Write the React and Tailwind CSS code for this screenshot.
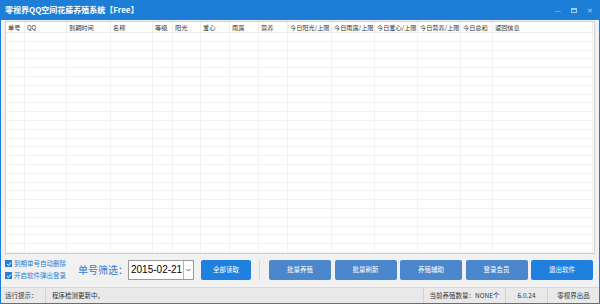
import React from "react";

const cols = [
  { w: 19, t: "单号" },
  { w: 42, t: "QQ" },
  { w: 44, t: "到期时间" },
  { w: 42, t: "名称" },
  { w: 20, t: "等级" },
  { w: 28, t: "阳光" },
  { w: 29, t: "爱心" },
  { w: 29, t: "雨露" },
  { w: 29, t: "营养" },
  { w: 44, t: "今日阳光/上限" },
  { w: 43, t: "今日雨露/上限" },
  { w: 43, t: "今日爱心/上限" },
  { w: 43, t: "今日营养/上限" },
  { w: 32, t: "今日总和" },
  { w: 100, t: "返回信息" },
];

const rows = Array.from({ length: 25 });

const Check = ({ label }) => (
  <div className="flex items-center gap-[2px] h-[11px]">
    <span className="w-[7px] h-[7px] bg-[#2b7fd4] flex items-center justify-center shrink-0">
      <svg width="6" height="6" viewBox="0 0 6 6">
        <path d="M1 3 L2.5 4.5 L5 1.5" stroke="#fff" strokeWidth="1" fill="none" />
      </svg>
    </span>
    <span className="text-[6.5px] text-[#2b7fd4] leading-none whitespace-nowrap">{label}</span>
  </div>
);

const Btn = ({ children, bright }) => (
  <button
    className={
      "w-[62px] h-[20px] rounded-[2px] text-white text-[6.5px] shrink-0 " +
      (bright ? "bg-[#1f80e0]" : "bg-[#4a87cc]")
    }
  >
    {children}
  </button>
);

export default function App() {
  return (
    <div
      className="w-[600px] h-[304px] flex flex-col bg-[#f1f1f1] border-x border-b border-[#1c7ed6] overflow-hidden"
      style={{ fontFamily: '"Noto Sans CJK SC", "Noto Sans", sans-serif' }}
    >
      {/* title bar */}
      <div className="h-[20px] bg-[#1c7ed6] flex items-center justify-between pl-[4px] pr-[6px] shrink-0">
        <span className="text-white text-[8px] font-bold">零视界QQ空间花藤养殖系统【Free】</span>
        <div className="flex items-center gap-[10px] text-[#a9cdf1] text-[7px]">
          <span>—</span>
          <span className="w-[6px] h-[5px] border border-[#a9cdf1] border-t-2"></span>
          <span>✕</span>
        </div>
      </div>

      {/* table */}
      <div className="mx-[4px] mt-[1px] h-[233px] bg-white border border-[#cfcfcf] overflow-hidden shrink-0">
        <div className="flex h-[11px] border-b border-[#ececec]">
          {cols.map((c, i) => (
            <div
              key={i}
              className="border-r border-[#ececec] text-[6.2px] text-[#333] leading-[11px] pl-[2px] whitespace-nowrap overflow-hidden"
              style={{ width: c.w }}
            >
              {c.t}
            </div>
          ))}
        </div>
        {rows.map((_, r) => (
          <div key={r} className="flex h-[8.8px] border-b border-[#f2f2f2]">
            {cols.map((c, i) => (
              <div key={i} className="border-r border-[#f2f2f2]" style={{ width: c.w }} />
            ))}
          </div>
        ))}
      </div>

      {/* controls */}
      <div className="flex items-center h-[31px] pl-[4px] shrink-0">
        <div className="flex flex-col gap-[1px] w-[66px] shrink-0">
          <Check label="到期单号自动删除" />
          <Check label="开启软件弹出登录" />
        </div>
        <span className="w-[48px] ml-[7px] text-[10px] text-[#2b7fd4] whitespace-nowrap shrink-0">单号筛选：</span>
        <div className="ml-[2px] w-[66px] h-[20px] bg-white border border-[#9a9a9a] flex items-center shrink-0">
          <span
            className="text-[10px] text-black pl-[2px] flex-1 leading-none whitespace-nowrap overflow-hidden"
            style={{ fontFamily: '"Liberation Sans", sans-serif' }}
          >
            2015-02-21
          </span>
          <span className="w-[10px] h-[18px] border-l border-[#b5b5b5] flex items-center justify-center shrink-0">
            <svg width="5" height="4" viewBox="0 0 5 4">
              <path d="M0.5 1 L2.5 3 L4.5 1" stroke="#555" strokeWidth="0.9" fill="none" />
            </svg>
          </span>
        </div>
        <button className="ml-[7px] w-[50px] h-[20px] rounded-[2px] bg-[#1f80e0] text-white text-[6.5px] shrink-0">全部读取</button>
        <div className="ml-[8px] w-px h-[20px] bg-[#d6d6d6] shrink-0"></div>
        <div className="ml-[9px] flex gap-[3.5px]">
          <Btn>批量养殖</Btn>
          <Btn>批量刷新</Btn>
          <Btn>养殖辅助</Btn>
          <Btn>登录会员</Btn>
          <Btn bright>退出软件</Btn>
        </div>
      </div>

      {/* status bar */}
      <div className="flex-1 bg-[#e9e9e9] border-t border-[#d8d8d8] flex items-center text-[6.5px] text-[#333] mt-[2px]">
        <div className="w-[45px] pl-[4px] border-r border-[#d2d2d2] h-full flex items-center">运行提示：</div>
        <div className="flex-1 pl-[6px]">程序检测更新中。</div>
        <div className="w-[82px] border-l border-[#d2d2d2] h-full flex items-center justify-center">当前养殖数量：NONE个</div>
        <div className="w-[42px] border-l border-[#d2d2d2] h-full flex items-center justify-center">6.0.24</div>
        <div className="w-[52px] border-l border-[#d2d2d2] h-full flex items-center justify-center">零视界出品</div>
      </div>
    </div>
  );
}
